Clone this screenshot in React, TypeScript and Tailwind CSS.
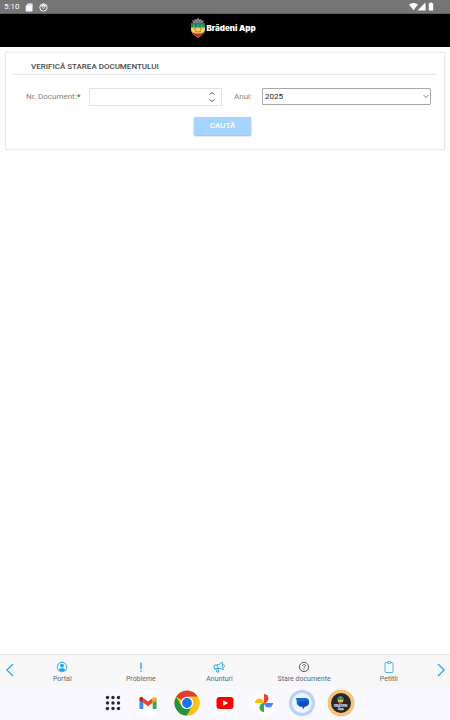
import type { ReactNode } from "react";

function StatusBar() {
  return (
    <div className="flex h-[14px] items-center justify-between border-b border-[#606060] bg-[#757575] pl-1 pr-[15px] text-white">
      <div className="flex items-center gap-[6px] pt-px">
        <span className="text-[8px] leading-[12px]">5:10</span>
        <svg className="h-[9px] w-[8px]" viewBox="0 0 8 9" fill="currentColor">
          <path d="M3.200.5H6.800a.7.7 0 0 1 .7.7v6.600a.7.7 0 0 1-.7.7H1.400a.7.7 0 0 1-.7-.7V3z" />
          <path d="M3.500 1.300v1.300M5 1.300v1.300M6.400 1.300v1.300" stroke="#999" strokeWidth=".5" />
        </svg>
        <svg className="h-[9px] w-[9px]" viewBox="0 0 9 9" fill="none" stroke="currentColor">
          <circle cx="4.500" cy="4.500" r="3.700" strokeWidth=".9" />
          <path d="M1 3.400 4.500 1 8 3.400Z" fill="currentColor" stroke="none" />
          <path d="m3 4.200 1.500 1.300L6.300 4" strokeWidth=".8" />
        </svg>
      </div>
      <svg className="h-[9px] w-[26px]" viewBox="0 0 26 9" fill="currentColor">
        <path d="M0 2.600C2.400.3 6.600.3 9 2.600L4.500 8.300z" />
        <path d="M16.500.5v8h-8z" />
        <path d="M21.200.5h1.800v.8h1.200v7.200h-4.400V1.300h1.400z" />
      </svg>
    </div>
  );
}

function Crest({ className }: { className: string }) {
  return (
    <svg className={className} viewBox="0 0 16 20">
      <path d="M3 5.500 2.300 2l2 .8L4.800 1l2 .8L7.300.3h1.400l.5 1.500 2-.8.5 1.800 2-.8-.7 3.500z" fill="#8f8f8f" />
      <path d="M4 4h8M5 3v1M8 2v2M11 3v1" stroke="#5c5c5c" strokeWidth=".6" />
      <path d="M1 5h14v6c0 4-3.300 6.500-7 8.800C4.300 17.500 1 15 1 11z" fill="#f2cf5b" />
      <path d="M1 5h14v4.500H1z" fill="#16845a" />
      <path d="M4 8.800V6.500M8 8.800V6.500M12 8.800V6.500" stroke="#8cc5a3" strokeWidth=".9" />
      <path d="M2 14c2 1 3.500 1.500 6 1.500s4-.5 6-1.500c-1.300 2.400-3.600 4.300-6 5.800-2.400-1.500-4.700-3.400-6-5.800z" fill="#cf1f3e" />
      <path d="M4 11h2M10 11h2M5 13c1.500 1.300 4.500 1.300 6 0" stroke="#7a6225" strokeWidth=".8" fill="none" />
    </svg>
  );
}

function Header() {
  return (
    <header className="flex h-[33px] items-start justify-center bg-black pr-1 pt-1">
      <Crest className="h-[20px] w-[16px]" />
      <h1 className="mt-1 font-['Inter',sans-serif] text-[8px] font-black leading-[12px] text-white">Brădeni App</h1>
    </header>
  );
}

function SearchCard() {
  return (
    <section className="mx-[5px] mt-[5px] border border-[#e9e9e9] px-[7px] pb-[14px] shadow-[0_0_1px_#ddd]">
      <h2 className="border-b border-[#e5e5e5] pb-px pl-[18px] pt-2 text-[8px] font-medium leading-[12px] text-[#4a4a4a]">
        VERIFICĂ STAREA DOCUMENTULUI
      </h2>
      <form className="pt-[13px]" onSubmit={(event) => event.preventDefault()}>
        <div className="grid grid-cols-[63px_133fr_40px_169fr] items-start pl-[13px] pr-[6px] text-[8px] leading-[18px] text-[#828282]">
          <label htmlFor="document-number">
            Nr. Document:<span className="font-bold text-[#2c9a2c]">*</span>
          </label>
          <div className="relative">
            <input
              id="document-number"
              type="text"
              inputMode="numeric"
              className="block h-[18px] w-full border border-[#e2e2e2] bg-white pl-1 pr-4 text-[8px] text-[#333] outline-none"
            />
            <svg className="pointer-events-none absolute right-[6px] top-[3px] h-3 w-2" viewBox="0 0 8 12" fill="none" stroke="#555">
              <path d="m1.500 3.500 2.500-2 2.500 2M1.500 8.500l2.500 2 2.500-2" />
            </svg>
          </div>
          <label htmlFor="document-year" className="pl-3">Anul:</label>
          <div className="relative">
            <select
              id="document-year"
              defaultValue="2025"
              className="block h-[17px] w-full appearance-none rounded-[1px] border border-[#a8a8a8] bg-white pl-[2px] text-[8px] leading-[12px] text-[#222]"
            >
              <option>2025</option>
              <option>2024</option>
              <option>2023</option>
            </select>
            <svg className="pointer-events-none absolute right-[2px] top-[6px] h-[5px] w-[6px]" viewBox="0 0 6 5" fill="none" stroke="#555" strokeWidth=".8">
              <path d="m.5 1 2.500 2.500L5.500 1" />
            </svg>
          </div>
        </div>
        <div className="flex justify-center pr-[5px] pt-[11px]">
          <button
            type="submit"
            className="h-[18px] w-[57px] rounded-[1px] bg-[#a4d4ff] text-[8px] font-medium leading-[18px] text-white shadow-[0_1px_2px_#aaa]"
          >
            CAUTĂ
          </button>
        </div>
      </form>
    </section>
  );
}

function NavItem({ label, children }: { label: string; children: ReactNode }) {
  return (
    <a href="#" className="flex flex-col items-center gap-[2px] text-[7px] leading-[8px] text-[#5c6878]">
      <svg className="h-3 w-3 text-[#18a4f0]" viewBox="0 0 12 12" fill="none" stroke="currentColor">
        {children}
      </svg>
      {label}
    </a>
  );
}

function Chevron({ label, d }: { label: string; d: string }) {
  return (
    <button type="button" aria-label={label} className="flex w-[19px] justify-center">
      <svg className="h-[14px] w-2" viewBox="0 0 8 14" fill="none" stroke="#18a4f0" strokeWidth="1.200">
        <path d={d} />
      </svg>
    </button>
  );
}

function TabBar() {
  return (
    <nav className="flex h-[32px] items-center border-t border-[#e4e4e4] bg-[#f7f7f7]">
      <Chevron label="Înapoi" d="M7 0 .8 6l6.200 6" />
      <div className="grid flex-1 grid-cols-[78fr_78fr_78fr_90fr_78fr] pl-1 pr-[3px] pt-[3px]">
        <NavItem label="Portal">
          <circle cx="6" cy="6" r="4.800" strokeWidth=".9" />
          <circle cx="6" cy="4.700" r="1.900" fill="currentColor" stroke="none" />
          <path d="M2.700 9c1-2.500 5.600-2.500 6.600 0C7.500 10.700 4.500 10.700 2.700 9z" fill="currentColor" stroke="none" />
        </NavItem>
        <NavItem label="Probleme">
          <path d="M6 1.500v6.500M6 9.300v1.500" strokeWidth="1.300" />
        </NavItem>
        <NavItem label="Anunturi">
          <path d="M1 4.300l3.500-.5c2-.3 3.300-1.200 4.700-2.800l1 8c-1.500-1.300-3-1.800-5-1.500l-3.700.4zM4.500 3.800l.5 3.700M2.800 7.800l1 3.200h2L4.800 7.600M10.300 3.800c1.500 0 1.700 2 .3 2.500" strokeWidth=".9" />
        </NavItem>
        <NavItem label="Stare documente">
          <g stroke="#40495a">
            <circle cx="6" cy="6" r="4.600" strokeWidth=".9" />
            <path d="M4.500 5c0-2 3-2 3-.2C7.500 6 6 5.800 6 7M6 7.800v1" strokeWidth=".9" />
          </g>
        </NavItem>
        <NavItem label="Petitii">
          <g stroke="#4fb3ee">
            <rect x="2" y="1.500" width="8" height="10" rx="1" />
            <path d="M4.500.5h3v2h-3z" fill="#bfe2f8" strokeWidth=".8" />
          </g>
        </NavItem>
      </div>
      <Chevron label="Înainte" d="m1 0 6.200 6L1 12" />
    </nav>
  );
}

function DockButton({ label, children }: { label: string; children: ReactNode }) {
  return (
    <button type="button" aria-label={label} className="flex items-center justify-center">
      {children}
    </button>
  );
}

function Dock() {
  return (
    <div className="flex h-[34px] items-center justify-center bg-[#f9f8ff] pl-[7px]">
      <div className="grid w-[263px] grid-cols-[32px_repeat(6,1fr)]">
        <DockButton label="Aplicații">
          <svg className="h-[16px] w-[16px]" viewBox="0 0 16 16" fill="#25262f">
            <circle cx="2.500" cy="2.500" r="1.700" /><circle cx="8" cy="2.500" r="1.700" /><circle cx="13.500" cy="2.500" r="1.700" />
            <circle cx="2.500" cy="8" r="1.700" /><circle cx="8" cy="8" r="1.700" /><circle cx="13.500" cy="8" r="1.700" />
            <circle cx="2.500" cy="13.500" r="1.700" /><circle cx="8" cy="13.500" r="1.700" /><circle cx="13.500" cy="13.500" r="1.700" />
          </svg>
        </DockButton>
        <DockButton label="Gmail">
          <svg className="h-[26px] w-[26px]" viewBox="0 0 26 26">
            <circle cx="13" cy="13" r="12.500" fill="#fff" />
            <path d="M4.500 8.500v9.300c0 .8.500 1.200 1.200 1.200h2.600v-8z" fill="#4285f4" />
            <path d="M21.500 8.500v9.300c0 .8-.5 1.200-1.200 1.200h-2.600v-8z" fill="#34a853" />
            <path d="m8.300 8 4.700 3.500L17.700 8v4.800L13 16.300l-4.700-3.500z" fill="#ea4335" />
            <path d="M4.500 10V8.700C4.500 7 6.400 6.300 7.600 7.400l.7.600v4.800z" fill="#c5221f" />
            <path d="M21.500 10V8.700c0-1.700-1.900-2.400-3.100-1.300l-.7.600v4.800z" fill="#fbbc04" />
          </svg>
        </DockButton>
        <DockButton label="Chrome">
          <svg className="h-[26px] w-[26px]" viewBox="0 0 26 26">
            <circle cx="13" cy="13" r="12.500" fill="#fbc116" />
            <path d="M13 13 2.200 6.700a12.500 12.500 0 0 1 21.600 0H13z" fill="#e33b2e" />
            <path d="M2.200 6.700A12.500 12.500 0 0 0 13 25.500l5.400-9.400L13 13 7.600 16.100z" fill="#229342" />
            <path d="M13 6.700h10.800A12.500 12.500 0 0 1 13 25.500l5.400-9.400z" fill="#fbc116" />
            <circle cx="13" cy="13" r="6.200" fill="#fff" />
            <circle cx="13" cy="13" r="4.900" fill="#1a73e8" />
          </svg>
        </DockButton>
        <DockButton label="YouTube">
          <svg className="h-[26px] w-[26px]" viewBox="0 0 26 26">
            <circle cx="13" cy="13" r="12.500" fill="#fff" />
            <rect x="4.500" y="7" width="17" height="12" rx="3" fill="#f00" />
            <path d="m11.200 10.200 5 2.800-5 2.800z" fill="#fff" />
          </svg>
        </DockButton>
        <DockButton label="Fotografii">
          <svg className="h-[26px] w-[26px]" viewBox="0 0 26 26">
            <circle cx="13" cy="13" r="12.500" fill="#fff" />
            <path d="M13 4a4.500 4.500 0 0 1 4.500 4.500A4.500 4.500 0 0 1 13 13z" fill="#ea4335" />
            <path d="M22 13a4.500 4.500 0 0 1-9 0z" fill="#4285f4" />
            <path d="M13 22a4.500 4.500 0 0 1 0-9z" fill="#34a853" />
            <path d="M4 13a4.500 4.500 0 0 1 9 0z" fill="#fbbc04" />
          </svg>
        </DockButton>
        <DockButton label="Mesaje">
          <svg className="h-[26px] w-[26px]" viewBox="0 0 26 26">
            <circle cx="13" cy="13" r="13" fill="#c3c8d5" />
            <circle cx="13" cy="13" r="12.300" fill="#b5d5fb" />
            <circle cx="13" cy="13" r="9.900" fill="#eef4ff" />
            <path d="M6.500 8h9.700a3.800 3.800 0 0 1 0 8H11.500A3.800 3.800 0 0 1 7.700 12.200V10z" fill="#1764df" />
            <path d="M12.500 11.500h6.800c.8 2.800-1 5-3.600 5.200L14 19.500l-.5-2.700h-1a2.600 2.600 0 0 1 0-5.300z" fill="#0b4bb6" />
          </svg>
        </DockButton>
        <DockButton label="Brădeni App">
          <span className="flex h-[26px] w-[26px] flex-col items-center rounded-full border-[3px] border-[#fac474] bg-[#292625] pt-[3px] text-center font-['Inter',sans-serif] text-[3px] font-bold leading-[3px] text-white shadow-[0_0_1px_#888]">
            <Crest className="h-[8px] w-[7px]" />
            <span className="mt-px">BRĂDENI<br />App</span>
          </span>
        </DockButton>
      </div>
    </div>
  );
}

export default function App() {
  return (
    <div className="flex min-h-screen flex-col bg-white font-['Roboto',sans-serif]">
      <StatusBar />
      <Header />
      <main className="flex-1">
        <SearchCard />
      </main>
      <TabBar />
      <Dock />
    </div>
  );
}
